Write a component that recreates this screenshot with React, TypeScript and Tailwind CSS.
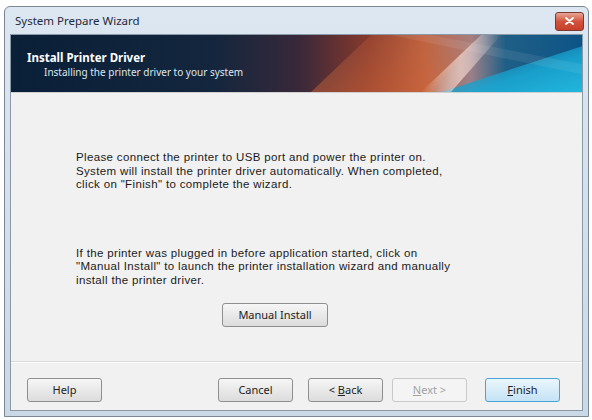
import React from 'react';

const ui = { fontFamily: '"Noto Sans", "Open Sans", "Liberation Sans", sans-serif' };
const body = { fontFamily: '"Liberation Sans", Arial, sans-serif' };

function Banner() {
  return (
    <div className="relative h-[57px] overflow-hidden bg-[#0c2440]">
      <svg className="absolute inset-0" width="575" height="57" viewBox="0 0 575 57" preserveAspectRatio="none">
        <defs>
          <linearGradient id="base" x1="0" y1="0" x2="1" y2="0">
            <stop offset="0" stopColor="#0a2038" />
            <stop offset="0.35" stopColor="#13263d" />
            <stop offset="0.5" stopColor="#38283a" />
            <stop offset="0.62" stopColor="#86392c" />
            <stop offset="0.72" stopColor="#b95e3e" />
            <stop offset="0.8" stopColor="#9c8088" />
            <stop offset="0.86" stopColor="#1f5f86" />
            <stop offset="1" stopColor="#0c5386" />
          </linearGradient>
          <linearGradient id="cyan" x1="0" y1="0" x2="1" y2="1">
            <stop offset="0" stopColor="#1a7fb0" stopOpacity="0" />
            <stop offset="0.6" stopColor="#19a6d2" stopOpacity="0.9" />
            <stop offset="1" stopColor="#22b8de" />
          </linearGradient>
          <linearGradient id="streak" x1="0" y1="0" x2="1" y2="0">
            <stop offset="0" stopColor="#ffffff" stopOpacity="0" />
            <stop offset="0.5" stopColor="#f3d9d0" stopOpacity="0.7" />
            <stop offset="1" stopColor="#ffffff" stopOpacity="0" />
          </linearGradient>
          <linearGradient id="glow" x1="0" y1="0" x2="0" y2="1">
            <stop offset="0" stopColor="#e07a48" stopOpacity="0.15" />
            <stop offset="1" stopColor="#d86a3a" stopOpacity="0.45" />
          </linearGradient>
        </defs>
        <rect width="575" height="57" fill="url(#base)" />
        <path d="M300 57 L360 0 L470 0 L420 57 Z" fill="url(#glow)" />
        <path d="M430 57 L575 10 L575 57 Z" fill="url(#cyan)" />
        <path d="M410 57 L470 0 L490 0 L440 57 Z" fill="url(#streak)" />
        <path d="M380 0 L575 40 L575 30 L420 0 Z" fill="#ffffff" opacity="0.08" />
      </svg>
      <div className="relative pl-[16px] pt-[15px] text-white" style={ui}>
        <div className="text-[11.5px] font-bold leading-[15px]">Install Printer Driver</div>
        <div className="pl-[17px] text-[10px] leading-[14px] text-[#dfe6ee]">Installing the printer driver to your system</div>
      </div>
    </div>
  );
}

function Btn({ label, className = '', disabled = false, primary = false }: { label: React.ReactNode; className?: string; disabled?: boolean; primary?: boolean }) {
  const border = disabled ? 'border-[#c9c9c9]' : primary ? 'border-[#4aa3d6]' : 'border-[#8f8f8f]';
  const bg = disabled
    ? 'bg-[#f4f4f4]'
    : primary
    ? 'bg-gradient-to-b from-[#eaf6fd] to-[#c4e3f5]'
    : 'bg-gradient-to-b from-[#f6f6f6] to-[#dcdcdc]';
  return (
    <div
      className={`flex h-[24px] w-[75px] items-center justify-center rounded-[3px] border text-[11px] ${border} ${bg} ${disabled ? 'text-[#a3a3a3]' : 'text-[#222]'} ${className}`}
      style={ui}
    >
      {label}
    </div>
  );
}

export default function App() {
  return (
    <div className="h-[420px] w-[592px] bg-white pt-[6px] pl-[4px]">
      <div className="flex h-[411px] w-[585px] flex-col rounded-t-[6px] border border-[#7b8794] bg-gradient-to-b from-[#dde7f1] to-[#cbd8e5] px-[5px] pb-[5px]">
        {/* title bar */}
        <div className="flex h-[27px] items-center justify-between">
          <span className="pl-[5px] text-[11.5px] text-[#1e2a3a]" style={ui}>System Prepare Wizard</span>
          <div className="mr-[-1px] mt-[1px] flex h-[19px] w-[29px] items-center justify-center rounded-[3px] border border-[#7a3a2e] bg-gradient-to-b from-[#e8a496] via-[#d1533c] to-[#c7402a]">
            <svg width="9" height="8" viewBox="0 0 9 8">
              <path d="M1 1 L8 7 M8 1 L1 7" stroke="#fff" strokeWidth="1.8" strokeLinecap="round" />
            </svg>
          </div>
        </div>

        <div className="flex flex-1 flex-col border border-[#8a99a8] bg-[#f1f1f1]">
          <Banner />
          <div className="h-px bg-[#d0d0d0]" />

          {/* wizard page */}
          <div className="flex flex-1 flex-col pl-[65px] pr-[20px] pt-[58px] text-[11.5px] leading-[13.5px] tracking-[0.35px] text-[#1a1a1a]" style={body}>
            <p>
              Please connect the printer to USB port and power the printer on.
              <br />
              System will install the printer driver automatically. When completed,
              <br />
              click on "Finish" to complete the wizard.
            </p>
            <p className="mt-[55px]">
              If the printer was plugged in before application started, click on
              <br />
              "Manual Install" to launch the printer installation wizard and manually
              <br />
              install the printer driver.
            </p>
            <div className="mt-[16px] flex pl-[146px] tracking-normal">
              <Btn label="Manual Install" className="h-[22px] w-[106px]" />
            </div>
          </div>

          {/* footer */}
          <div className="mt-auto border-t border-[#dadada] shadow-[inset_0_1px_0_#ffffff]">
            <div className="flex items-center pl-[16px] pr-[22px] pb-[8px] pt-[16px]">
              <Btn label="Help" />
              <div className="flex-1" />
              <Btn label="Cancel" />
              <Btn label={<span>&lt; <u>B</u>ack</span>} className="ml-[15px]" />
              <Btn label={<span><u>N</u>ext &gt;</span>} className="ml-[9px]" disabled />
              <Btn label={<span><u>F</u>inish</span>} className="ml-[18px]" primary />
            </div>
          </div>
        </div>
      </div>
    </div>
  );
}
